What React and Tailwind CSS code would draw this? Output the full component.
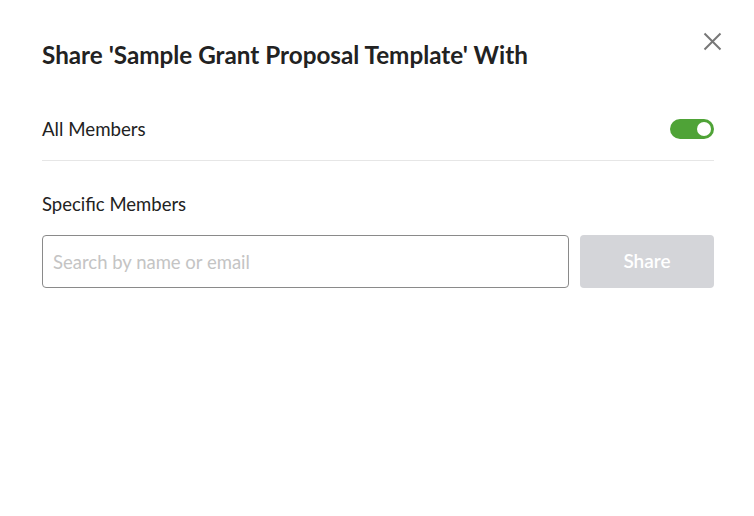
export default function App() {
  return (
    <div className="w-[754px] h-[516px] bg-white text-[#222] relative" style={{ fontFamily: "Lato, 'Noto Sans', sans-serif" }}>
      <button className="absolute top-[31px] right-[32px] w-[20px] h-[20px] flex items-center justify-center text-[#777]">
        <svg width="19" height="19" viewBox="0 0 19 19" fill="none" stroke="currentColor" strokeWidth="2">
          <path d="M1.5 1.5 L17.5 17.5 M17.5 1.5 L1.5 17.5" />
        </svg>
      </button>
      <div className="pl-[42px] pr-[40px] pt-[40px]">
        <h1 className="text-[24.25px] font-bold leading-[30px] text-[#222]">Share 'Sample Grant Proposal Template' With</h1>

        <div className="mt-[48px] flex items-center justify-between pb-[20px] border-b border-[#e6e6e6]">
          <span className="text-[18.7px] leading-[22px] text-[#222]">All Members</span>
          <div className="w-[44px] h-[20px] rounded-full bg-[#4fa337] flex items-center justify-end pr-[3px]">
            <div className="w-[14px] h-[14px] rounded-full bg-white" />
          </div>
        </div>

        <div className="mt-[32px] text-[18.5px] leading-[22px] text-[#222]">Specific Members</div>

        <div className="mt-[20px] flex gap-[11px]">
          <input
            placeholder="Search by name or email"
            className="flex-1 h-[53px] rounded-[4px] border border-[#8a8a8a] px-[10px] text-[18.5px] placeholder:text-[#c4c4c4] outline-none"
          />
          <button className="w-[134px] h-[53px] rounded-[4px] bg-[#d4d5d9] text-white text-[19px] font-semibold">
            Share
          </button>
        </div>
      </div>
    </div>
  );
}
